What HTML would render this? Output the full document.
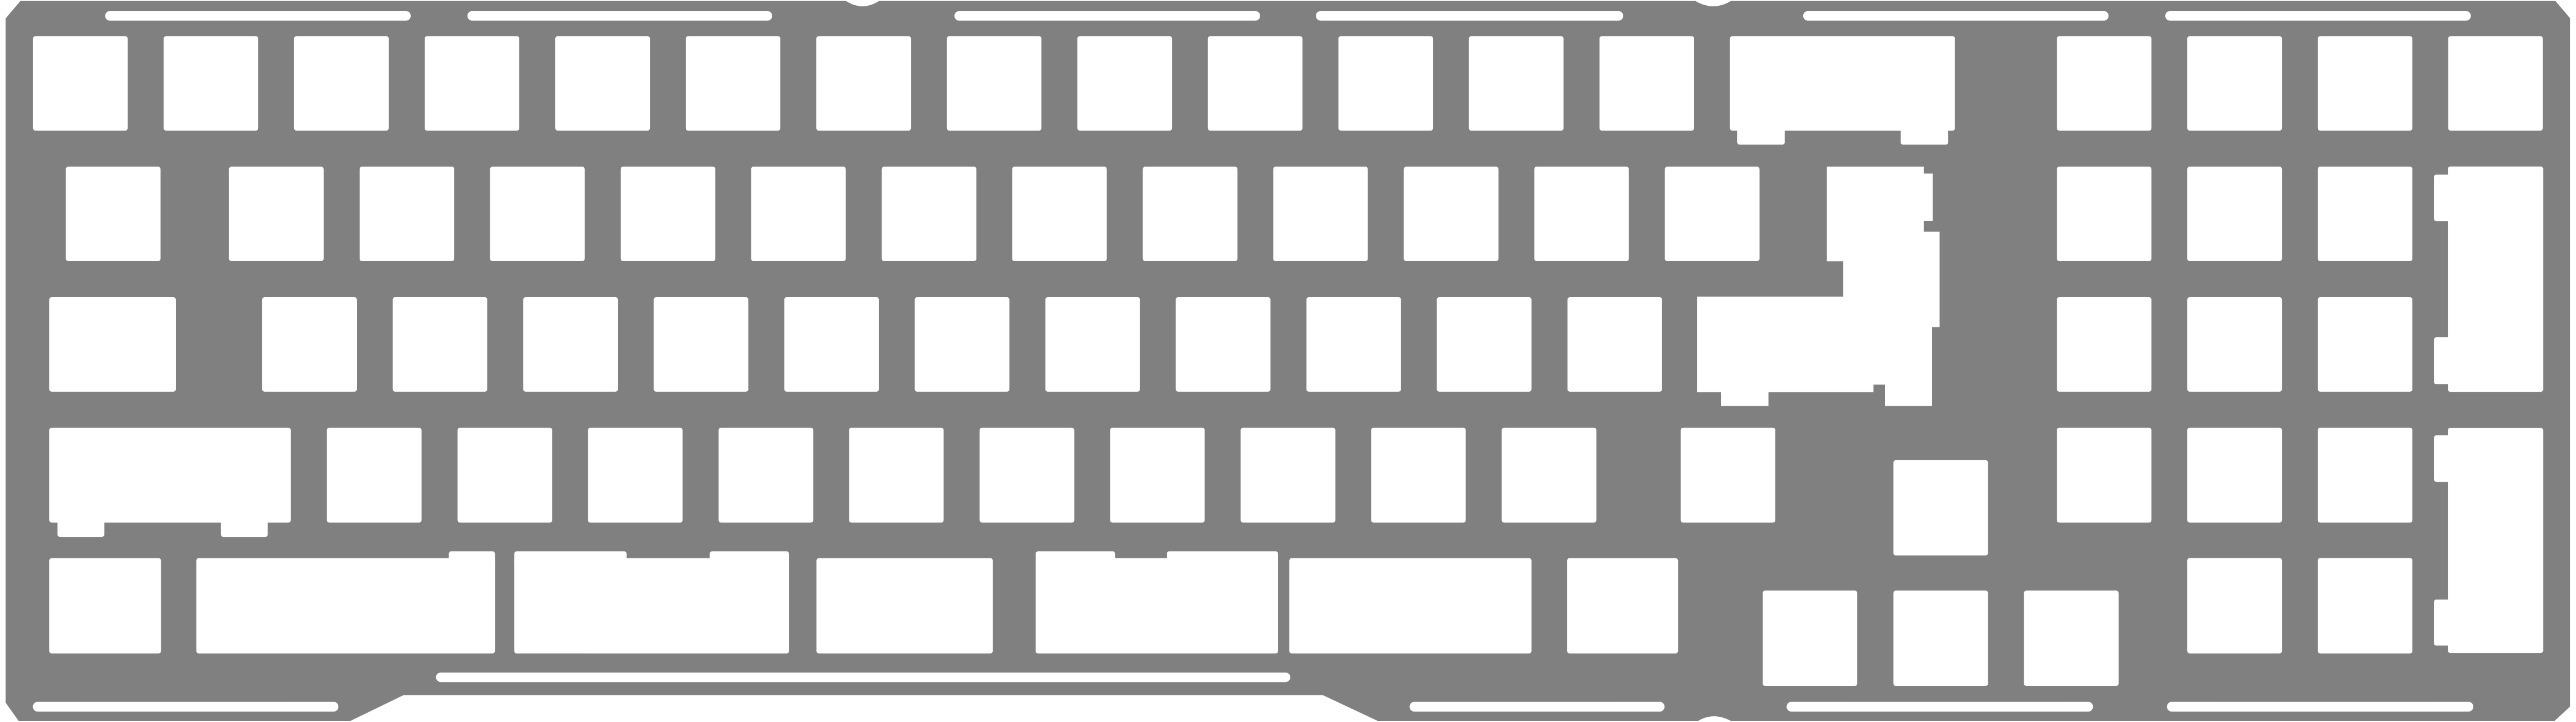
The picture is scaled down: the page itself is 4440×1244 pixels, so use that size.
<!DOCTYPE html>
<html><head><meta charset="utf-8"><style>
html,body{margin:0;padding:0;background:#fff;width:4440px;height:1244px;overflow:hidden}
svg{display:block}
</style></head><body>
<svg width="4440" height="1244" viewBox="0 0 1568 439.3" preserveAspectRatio="none" xmlns="http://www.w3.org/2000/svg">
<path fill="#808080" d="M12.4,0.6 L515,0.6 Q525,7 535,0.6 L1032,0.6 Q1043,7 1053.5,0.6 L1555.5,0.6 L1564.5,11.2 L1564.5,429.8 L1555,438.6 L1053.5,438.6 Q1043,433 1033.7,438.6 L838.5,438.6 L805.3,423 L245.5,423 L213.4,438.6 L11.3,438.6 L3.4,427.5 L3.4,11.2 Z"/>
<g fill="#fff">
<!-- top slots -->
<rect x="64" y="6.7" width="186" height="5.9" rx="2.9"/>
<rect x="284.5" y="6.7" width="185.5" height="5.9" rx="2.9"/>
<rect x="581" y="6.7" width="186" height="5.9" rx="2.9"/>
<rect x="801" y="6.7" width="187" height="5.9" rx="2.9"/>
<rect x="1097.6" y="6.7" width="185.9" height="5.9" rx="2.9"/>
<rect x="1318" y="6.7" width="186" height="5.9" rx="2.9"/>
<!-- bottom slots -->
<rect x="20" y="427" width="186" height="6" rx="3"/>
<rect x="265.4" y="409.2" width="520" height="5.8" rx="2.9"/>
<rect x="858" y="427" width="155.2" height="6" rx="3"/>
<rect x="1087.5" y="427" width="186.5" height="6" rx="3"/>
<rect x="1319" y="427" width="186.5" height="6" rx="3"/>

<!-- row 1 -->
<rect x="20.1" y="22" width="57.6" height="57.5" rx="1.5"/>
<rect x="99.6" y="22" width="57.6" height="57.5" rx="1.5"/>
<rect x="179" y="22" width="57.6" height="57.5" rx="1.5"/>
<rect x="258.5" y="22" width="57.6" height="57.5" rx="1.5"/>
<rect x="338" y="22" width="57.6" height="57.5" rx="1.5"/>
<rect x="417.4" y="22" width="57.6" height="57.5" rx="1.5"/>
<rect x="496.9" y="22" width="57.6" height="57.5" rx="1.5"/>
<rect x="576.3" y="22" width="57.6" height="57.5" rx="1.5"/>
<rect x="655.8" y="22" width="57.6" height="57.5" rx="1.5"/>
<rect x="735.2" y="22" width="57.6" height="57.5" rx="1.5"/>
<rect x="814.7" y="22" width="57.6" height="57.5" rx="1.5"/>
<rect x="894.1" y="22" width="57.6" height="57.5" rx="1.5"/>
<rect x="973.6" y="22" width="57.6" height="57.5" rx="1.5"/>
<rect x="1053" y="22" width="137" height="57.5" rx="1.5"/>
<rect x="1057.4" y="70" width="29" height="18" rx="1.5"/>
<rect x="1156.9" y="70" width="29" height="18" rx="1.5"/>
<rect x="1252" y="22" width="57.6" height="57.5" rx="1.5"/>
<rect x="1331.4" y="22" width="57.6" height="57.5" rx="1.5"/>
<rect x="1410.8" y="22" width="57.6" height="57.5" rx="1.5"/>
<rect x="1490.2" y="22" width="57.6" height="57.5" rx="1.5"/>

<!-- row 2 -->
<rect x="40.1" y="101.4" width="57.6" height="57.5" rx="1.5"/>
<rect x="139.4" y="101.4" width="57.6" height="57.5" rx="1.5"/>
<rect x="218.9" y="101.4" width="57.6" height="57.5" rx="1.5"/>
<rect x="298.3" y="101.4" width="57.6" height="57.5" rx="1.5"/>
<rect x="377.8" y="101.4" width="57.6" height="57.5" rx="1.5"/>
<rect x="457.2" y="101.4" width="57.6" height="57.5" rx="1.5"/>
<rect x="536.7" y="101.4" width="57.6" height="57.5" rx="1.5"/>
<rect x="616.1" y="101.4" width="57.6" height="57.5" rx="1.5"/>
<rect x="695.6" y="101.4" width="57.6" height="57.5" rx="1.5"/>
<rect x="775" y="101.4" width="57.6" height="57.5" rx="1.5"/>
<rect x="854.5" y="101.4" width="57.6" height="57.5" rx="1.5"/>
<rect x="933.9" y="101.4" width="57.6" height="57.5" rx="1.5"/>
<rect x="1013.4" y="101.4" width="57.6" height="57.5" rx="1.5"/>
<rect x="1252" y="101.4" width="57.6" height="57.5" rx="1.5"/>
<rect x="1331.4" y="101.4" width="57.6" height="57.5" rx="1.5"/>
<rect x="1410.8" y="101.4" width="57.6" height="57.5" rx="1.5"/>
<!-- numpad plus -->
<rect x="1490" y="101.3" width="58" height="137.1" rx="1.5"/>
<rect x="1481.5" y="106.2" width="10" height="28.4" rx="1.5"/>
<rect x="1481.5" y="205.2" width="10" height="28.6" rx="1.5"/>

<!-- enter -->
<path d="M1112,101.4 L1171,101.4 L1171,105.6 L1176.5,105.6 L1176.5,134.5 L1171,134.5 L1171,141 L1180.6,141 L1180.6,199 L1176,199 L1176,247 L1147.4,247 L1147.4,234 L1140.4,234 L1140.4,238.6 L1076.5,238.6 L1076.5,247 L1047.5,247 L1047.5,238.6 L1033,238.6 L1033,180.5 L1122,180.5 L1122,159 L1112,159 Z"/>

<!-- row 3 -->
<rect x="30" y="180.8" width="77" height="57.5" rx="1.5"/>
<rect x="159.6" y="180.8" width="57.6" height="57.5" rx="1.5"/>
<rect x="239" y="180.8" width="57.6" height="57.5" rx="1.5"/>
<rect x="318.5" y="180.8" width="57.6" height="57.5" rx="1.5"/>
<rect x="397.9" y="180.8" width="57.6" height="57.5" rx="1.5"/>
<rect x="477.4" y="180.8" width="57.6" height="57.5" rx="1.5"/>
<rect x="556.8" y="180.8" width="57.6" height="57.5" rx="1.5"/>
<rect x="636.3" y="180.8" width="57.6" height="57.5" rx="1.5"/>
<rect x="715.7" y="180.8" width="57.6" height="57.5" rx="1.5"/>
<rect x="795.2" y="180.8" width="57.6" height="57.5" rx="1.5"/>
<rect x="874.6" y="180.8" width="57.6" height="57.5" rx="1.5"/>
<rect x="954.1" y="180.8" width="57.6" height="57.5" rx="1.5"/>
<rect x="1252" y="180.8" width="57.6" height="57.5" rx="1.5"/>
<rect x="1331.4" y="180.8" width="57.6" height="57.5" rx="1.5"/>
<rect x="1410.8" y="180.8" width="57.6" height="57.5" rx="1.5"/>

<!-- row 4 -->
<rect x="30" y="260.2" width="147" height="57.8" rx="1.5"/>
<rect x="35" y="310" width="28.5" height="16.7" rx="1.5"/>
<rect x="134.5" y="310" width="28.5" height="16.7" rx="1.5"/>
<rect x="199" y="260.2" width="57.6" height="57.8" rx="1.5"/>
<rect x="278.5" y="260.2" width="57.6" height="57.8" rx="1.5"/>
<rect x="357.9" y="260.2" width="57.6" height="57.8" rx="1.5"/>
<rect x="437.4" y="260.2" width="57.6" height="57.8" rx="1.5"/>
<rect x="516.8" y="260.2" width="57.6" height="57.8" rx="1.5"/>
<rect x="596.3" y="260.2" width="57.6" height="57.8" rx="1.5"/>
<rect x="675.7" y="260.2" width="57.6" height="57.8" rx="1.5"/>
<rect x="755.2" y="260.2" width="57.6" height="57.8" rx="1.5"/>
<rect x="834.6" y="260.2" width="57.6" height="57.8" rx="1.5"/>
<rect x="914.1" y="260.2" width="57.6" height="57.8" rx="1.5"/>
<rect x="1023" y="260.2" width="57.6" height="57.8" rx="1.5"/>
<rect x="1152.5" y="280" width="57.6" height="58" rx="1.5"/>
<rect x="1252" y="260.2" width="57.6" height="57.8" rx="1.5"/>
<rect x="1331.4" y="260.2" width="57.6" height="57.8" rx="1.5"/>
<rect x="1410.8" y="260.2" width="57.6" height="57.8" rx="1.5"/>
<!-- numpad enter -->
<rect x="1490" y="260.3" width="58" height="137" rx="1.5"/>
<rect x="1481.5" y="264.9" width="10" height="28.3" rx="1.5"/>
<rect x="1481.5" y="364.8" width="10" height="28" rx="1.5"/>

<!-- row 5 -->
<rect x="30" y="339.6" width="68" height="58" rx="1.5"/>
<rect x="119.5" y="339.6" width="181.8" height="58" rx="1.5"/>
<rect x="273.2" y="335.5" width="28.1" height="10" rx="1.5"/>
<rect x="313" y="339.6" width="167.3" height="58" rx="1.5"/>
<rect x="313" y="335.5" width="68.4" height="10" rx="1.5"/>
<rect x="432" y="335.5" width="48.3" height="10" rx="1.5"/>
<rect x="497" y="339.6" width="107.3" height="58" rx="1.5"/>
<rect x="630.4" y="339.6" width="147.6" height="58" rx="1.5"/>
<rect x="630.4" y="335.5" width="48.4" height="10" rx="1.5"/>
<rect x="710.2" y="335.5" width="67.8" height="10" rx="1.5"/>
<rect x="784.8" y="339.6" width="147.4" height="58" rx="1.5"/>
<rect x="953.9" y="339.6" width="67.5" height="58" rx="1.5"/>
<rect x="1073" y="359.3" width="57.5" height="58.1" rx="1.5"/>
<rect x="1152.5" y="359.3" width="57.6" height="58.1" rx="1.5"/>
<rect x="1232" y="359.3" width="57.6" height="58.1" rx="1.5"/>
<rect x="1331.4" y="339.5" width="57.6" height="58.1" rx="1.5"/>
<rect x="1410.8" y="339.5" width="57.6" height="58.1" rx="1.5"/>
</g>
</svg>
</body></html>
